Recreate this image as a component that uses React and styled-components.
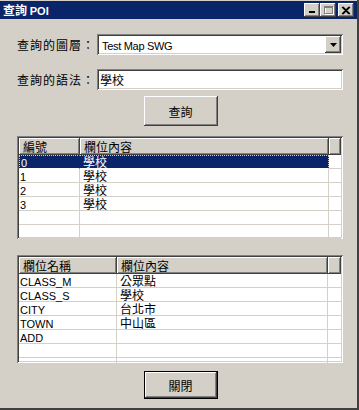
import React from 'react';
import styled, { createGlobalStyle, css } from 'styled-components';

const GlobalStyle = createGlobalStyle`
  html, body {
    margin: 0;
    padding: 0;
    background: #d4d0c8;
  }
  body {
    font-family: "Noto Sans CJK TC", "Liberation Sans", sans-serif;
    font-size: 12px;
    color: #000;
  }
`;

const raised = css`
  background: #d4d0c8;
  box-shadow: inset -1px -1px #404040, inset 1px 1px #fff,
    inset -2px -2px #808080, inset 2px 2px #d4d0c8;
`;

const sunken = css`
  background: #fff;
  box-shadow: inset 1px 1px #808080, inset -1px -1px #fff,
    inset 2px 2px #404040, inset -2px -2px #d4d0c8;
`;

const Window = styled.div`
  width: 359px;
  height: 410px;
  box-sizing: border-box;
  padding-top: 1px;
  border-right: 2px solid #404040;
  border-bottom: 2px solid #404040;
  background: #d4d0c8;
  display: flex;
  flex-direction: column;
  overflow: hidden;
`;

const TitleBar = styled.div`
  height: 18px;
  background: #0a246a;
  display: flex;
  align-items: center;
  padding: 0 3px;
  color: #fff;
  font-weight: bold;
`;

const TitleText = styled.div`
  flex: 1;
  font-size: 12px;
  line-height: 18px;
  white-space: nowrap;
`;

const Latin = styled.span`
  font-family: "Liberation Sans", sans-serif;
  font-size: 11px;
  letter-spacing: ${(p) => (p.$tight ? '-0.3px' : '0')};
`;

const TitleButtons = styled.div`
  display: flex;
  align-items: center;
`;

const TitleButton = styled.div`
  ${raised}
  width: 16px;
  height: 14px;
  margin-left: ${(p) => (p.$gap ? '2px' : '0')};
  display: flex;
  align-items: center;
  justify-content: center;
`;

const Body = styled.div`
  flex: 1;
  display: flex;
  flex-direction: column;
  padding: 0 14px 0 17px;
`;

const FieldRow = styled.div`
  display: flex;
  align-items: center;
  height: 21px;
  margin-top: ${(p) => p.$top}px;
`;

const Label = styled.div`
  width: 80px;
  letter-spacing: 1px;
  white-space: nowrap;
`;

const Combo = styled.div`
  ${sunken}
  flex: 1;
  height: 21px;
  box-sizing: border-box;
  padding: 2px;
  display: flex;
  align-items: center;
`;

const ComboText = styled.div`
  flex: 1;
  padding-left: 3px;
`;

const DropButton = styled.div`
  ${raised}
  width: 16px;
  height: 17px;
  display: flex;
  align-items: center;
  justify-content: center;
`;

const TextInput = styled.div`
  ${sunken}
  flex: 1;
  height: 21px;
  box-sizing: border-box;
  padding: 0 3px;
  line-height: 21px;
`;

const Button = styled.div`
  ${raised}
  align-self: center;
  width: 74px;
  height: ${(p) => p.$h}px;
  margin-top: ${(p) => p.$top}px;
  margin-left: 1px;
  display: flex;
  align-items: center;
  justify-content: center;
  color: #000;
  ${(p) => p.$default && css`
    box-shadow: inset 0 0 0 1px #000, inset -2px -2px #404040,
      inset 2px 2px #fff, inset -3px -3px #808080;
  `}
`;

const ListBox = styled.div`
  ${sunken}
  height: ${(p) => p.$h}px;
  margin-top: ${(p) => p.$top}px;
  box-sizing: border-box;
  padding: 2px;
  overflow: hidden;
`;

const Header = styled.div`
  display: grid;
  grid-template-columns: ${(p) => p.$cols};
  height: 17px;
`;

const HeaderCell = styled.div`
  ${raised}
  padding-left: 4px;
  line-height: 17px;
  white-space: nowrap;
`;

const Row = styled.div`
  display: grid;
  grid-template-columns: ${(p) => p.$cols};
  height: 14px;
`;

const Cell = styled.div`
  box-sizing: border-box;
  padding-left: ${(p) => (p.$first ? 1 : 3)}px;
  line-height: 13px;
  height: 14px;
  white-space: nowrap;
  border-bottom: 1px solid #d4d0c8;
  border-right: ${(p) => (p.$filler ? 'none' : '1px solid #d4d0c8')};
  ${(p) => p.$selected && css`
    background: #0a246a;
    color: #fff;
    border-top: 1px dotted #d4d0c8;
    border-bottom: 1px solid #fff;
    border-right: 1px solid #0a246a;
    line-height: 12px;
  `}
  ${(p) => p.$selected && p.$first && css`
    border-left: 1px dotted #d4d0c8;
  `}
  ${(p) => p.$selected && p.$last && css`
    border-right: 1px dotted #d4d0c8;
  `}
`;

const isLatin = (s) => /^[\x00-\x7f]+$/.test(s);

const Text = ({ value }) => (isLatin(value) ? <Latin>{value}</Latin> : value);

const GridList = ({ cols, headers, rows, height, top, rowCount, selected }) => {
  const filled = [...rows];
  while (filled.length < rowCount) filled.push(['', '']);
  return (
    <ListBox $h={height} $top={top}>
      <Header $cols={cols}>
        {headers.map((h) => <HeaderCell key={h}>{h}</HeaderCell>)}
        <HeaderCell />
      </Header>
      {filled.map((r, i) => (
        // eslint-disable-next-line react/no-array-index-key
        <Row $cols={cols} key={i}>
          <Cell $first $selected={i === selected}><Text value={r[0]} /></Cell>
          <Cell $last $selected={i === selected}><Text value={r[1]} /></Cell>
          <Cell $filler />
        </Row>
      ))}
    </ListBox>
  );
};

const resultRows = [
  ['0', '學校'],
  ['1', '學校'],
  ['2', '學校'],
  ['3', '學校'],
];

const fieldRows = [
  ['CLASS_M', '公眾點'],
  ['CLASS_S', '學校'],
  ['CITY', '台北市'],
  ['TOWN', '中山區'],
  ['ADD', ''],
];

const App = () => (
  <>
    <GlobalStyle />
    <Window>
      <TitleBar>
        <TitleText>
          查詢
          {' '}
          <Latin>POI</Latin>
        </TitleText>
        <TitleButtons>
          <TitleButton>
            <svg width="8" height="8" viewBox="0 0 8 8">
              <rect x="1" y="5" width="6" height="2" fill="#000" />
            </svg>
          </TitleButton>
          <TitleButton>
            <svg width="11" height="10" viewBox="0 0 11 10">
              <rect x="2.5" y="2.5" width="8" height="7" fill="none" stroke="#fff" />
              <rect x="1.5" y="1.5" width="8" height="7" fill="none" stroke="#808080" />
              <rect x="1" y="1" width="9" height="2" fill="#808080" />
            </svg>
          </TitleButton>
          <TitleButton $gap>
            <svg width="10" height="9" viewBox="0 0 10 9">
              <path d="M1 1 L8 8 M2 1 L9 8 M8 1 L1 8 M9 1 L2 8" stroke="#000" strokeWidth="1.1" />
            </svg>
          </TitleButton>
        </TitleButtons>
      </TitleBar>
      <Body>
        <FieldRow $top={15}>
          <Label>查詢的圖層：</Label>
          <Combo>
            <ComboText><Latin $tight>Test Map SWG</Latin></ComboText>
            <DropButton>
              <svg width="7" height="4" viewBox="0 0 7 4">
                <path d="M0 0 H7 L3.5 4 Z" fill="#000" />
              </svg>
            </DropButton>
          </Combo>
        </FieldRow>
        <FieldRow $top={14}>
          <Label>查詢的語法：</Label>
          <TextInput>學校</TextInput>
        </FieldRow>
        <Button $h={30} $top={6}>查詢</Button>
        <GridList
          cols="61px 249px 1fr"
          headers={['編號', '欄位內容']}
          rows={resultRows}
          height={103}
          top={10}
          rowCount={6}
          selected={0}
        />
        <GridList
          cols="98px 211px 1fr"
          headers={['欄位名稱', '欄位內容']}
          rows={fieldRows}
          height={108}
          top={16}
          rowCount={7}
          selected={-1}
        />
        <Button $h={28} $top={8} $default>關閉</Button>
      </Body>
    </Window>
  </>
);

export default App;
